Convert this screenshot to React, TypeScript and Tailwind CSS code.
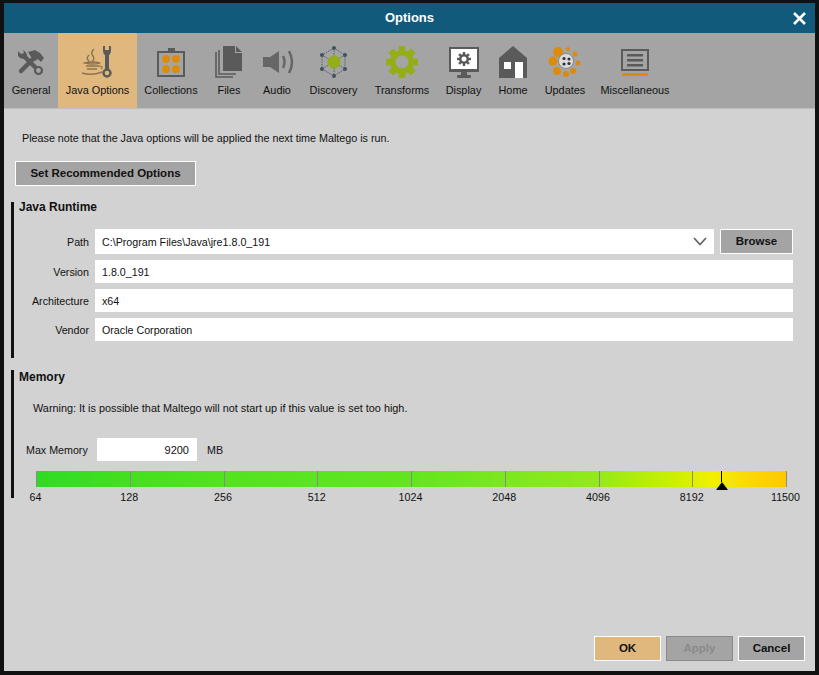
import React from 'react';

const DARK = '#5a5a5a';
const ORANGE = '#dc8c0c';

function Gear({ cx, cy, r, hole, color, tooth, toothW, teeth = 8, holeFill = 'none' }: { cx: number; cy: number; r: number; hole: number; color: string; tooth: number; toothW: number; teeth?: number; holeFill?: string }) {
  return (
    <g>
      {Array.from({ length: teeth }).map((_, i) => (
        <rect key={i} x={cx - toothW / 2} y={cy - r - tooth} width={toothW} height={tooth + 2} fill={color} transform={`rotate(${(360 / teeth) * i} ${cx} ${cy})`} />
      ))}
      <circle cx={cx} cy={cy} r={(r + hole) / 2} fill={holeFill} stroke={color} strokeWidth={r - hole} />
    </g>
  );
}

function GeneralIcon() {
  return (
    <svg viewBox="11 45 40 34" className="h-[34px] w-10">
      <path d="M21 71 L36 56" stroke={DARK} strokeWidth="4.5" strokeLinecap="round" />
      <path d="M28 52 L35 50 L40 53 L44 58 L41 62 L38 59 L35 61 L31 57 Z" fill={DARK} />
      <path d="M24 56 L39 71" stroke={DARK} strokeWidth="4.5" />
      <path d="M18 51 L21 54 L24 53 L23 50 L21 50 L23 50 Q27 52 27 56 L25 59 Q20 59 18 56 Z" fill={DARK} />
      <circle cx="38.5" cy="70.5" r="3.5" fill="#a4a4a4" stroke={DARK} strokeWidth="2.2" />
    </svg>
  );
}

function JavaIcon() {
  const tan = '#8d7350';
  return (
    <svg viewBox="78 45 40 34" className="h-[34px] w-10">
      <path d="M94 49 Q90 53 93 56 Q95 59 92 62 M89 55 Q86 58 88 60 Q90 62 88 64" stroke={tan} strokeWidth="1.4" fill="none" />
      <path d="M85 63 Q92 61 100 63 Q92 65 85 63 Z M86 66 L99 66 M87 69 L97 69 M82 73 Q92 76 102 72" stroke={tan} strokeWidth="1.6" fill="none" />
      <path d="M99 66 Q104 66 101 69" stroke={tan} strokeWidth="1.2" fill="none" />
      <path d="M103 46 L103 50 Q103 54 105 55 L105 69 L109 69 L109 55 Q111 54 111 50 L111 46 L109 46 L109 50 L105 50 L105 46 Z" fill={DARK} />
      <circle cx="107" cy="73" r="3.5" fill="#e0b87e" stroke={DARK} strokeWidth="2.4" />
    </svg>
  );
}

function CollectionsIcon() {
  return (
    <svg viewBox="151 45 40 34" className="h-[34px] w-10">
      <rect x="168" y="48" width="7" height="4" fill={DARK} />
      <rect x="158" y="52" width="26" height="24" fill="none" stroke={DARK} strokeWidth="2" />
      <circle cx="166" cy="59" r="4" fill={ORANGE} />
      <circle cx="176" cy="59" r="4" fill={ORANGE} />
      <circle cx="166" cy="69" r="4" fill={ORANGE} />
      <circle cx="176" cy="69" r="4" fill={ORANGE} />
    </svg>
  );
}

function FilesIcon() {
  return (
    <svg viewBox="209 45 40 34" className="h-[34px] w-10">
      <path d="M216 52 V77 H233" fill="none" stroke={DARK} strokeWidth="1.6" />
      <path d="M219 50 V74 H236" fill="none" stroke={DARK} strokeWidth="1.6" />
      <path d="M223 46 H235 V53 H242 V71 H223 Z" fill={DARK} />
      <path d="M236 46 L242 52 H236 Z" fill={DARK} />
    </svg>
  );
}

function AudioIcon() {
  return (
    <svg viewBox="257 45 40 34" className="h-[34px] w-10">
      <path d="M263 57 H270 L279 51 V73 L270 67 H263 Z" fill="#666" />
      <path d="M283 56 Q286 62 283 68" fill="none" stroke="#666" strokeWidth="2.5" />
      <path d="M289 51 Q295 62 289 73" fill="none" stroke="#666" strokeWidth="2.5" />
    </svg>
  );
}

function DiscoveryIcon() {
  const nodes = [[333, 48], [344, 55], [344, 69], [333, 76], [321, 69], [321, 55]];
  return (
    <svg viewBox="313 45 40 34" className="h-[34px] w-10">
      <path d="M333 48 L344 55 V69 L333 76 L321 69 V55 Z M333 48 V76 M321 55 L344 69 M344 55 L321 69" fill="none" stroke="#4a5a60" strokeWidth="0.9" strokeDasharray="1.5 1" />
      <circle cx="333" cy="62" r="6.5" fill="#94ae17" />
      {nodes.map(([x, y]) => (
        <circle key={x * y} cx={x} cy={y} r="2" fill="#3f525c" />
      ))}
    </svg>
  );
}

function TransformsIcon() {
  return (
    <svg viewBox="382 45 40 34" className="h-[34px] w-10">
      <Gear cx={402} cy={62} r={12} hole={6.5} color="#94ae17" tooth={4} toothW={6.5} />
    </svg>
  );
}

function DisplayIcon() {
  return (
    <svg viewBox="443 45 40 34" className="h-[34px] w-10">
      <rect x="448" y="47" width="30" height="25" fill={DARK} />
      <rect x="450" y="49" width="26" height="20" fill="#fff" />
      <rect x="460" y="72" width="6" height="3" fill={DARK} />
      <rect x="456" y="75" width="14" height="3" rx="1" fill={DARK} />
      <Gear cx={463} cy={59} r={5} hole={2.5} color={DARK} tooth={2} toothW={2.4} />
    </svg>
  );
}

function HomeIcon() {
  return (
    <svg viewBox="493 45 40 34" className="h-[34px] w-10">
      <path d="M513 46 L527 58 V78 H499 V58 Z" fill={DARK} />
      <rect x="504" y="62" width="7" height="7" fill="#fff" />
      <rect x="515" y="62" width="8" height="16" fill="#fff" />
    </svg>
  );
}

function UpdatesIcon() {
  const dots = [[558, 52, 5], [568, 49, 2], [575, 54, 2.5], [578, 63, 2.5], [573, 71, 3], [566, 74, 3], [557, 71, 4], [553, 61, 4.5]];
  return (
    <svg viewBox="545 45 40 34" className="h-[34px] w-10">
      {dots.map(([x, y, r]) => (
        <circle key={x} cx={x} cy={y} r={r} fill={ORANGE} />
      ))}
      <circle cx="566" cy="61" r="7.5" fill="#dcdcdc" stroke="#8a8a8a" strokeWidth="1" />
      <circle cx="564" cy="58.5" r="1.6" fill="#333" />
      <circle cx="569" cy="59" r="1.6" fill="#333" />
      <circle cx="564" cy="64" r="1.6" fill="#333" />
      <circle cx="569" cy="63.5" r="1.6" fill="#333" />
    </svg>
  );
}

function MiscIcon() {
  return (
    <svg viewBox="615 45 40 34" className="h-[34px] w-10">
      <rect x="622" y="50" width="26" height="20" fill="none" stroke={DARK} strokeWidth="2" />
      <rect x="627" y="54" width="16" height="2.5" fill={DARK} />
      <rect x="627" y="59" width="16" height="2.5" fill={DARK} />
      <rect x="627" y="64" width="16" height="2.5" fill={DARK} />
      <rect x="622" y="73" width="26" height="3" fill={ORANGE} />
    </svg>
  );
}

const tabs = [
  { label: 'General', icon: <GeneralIcon />, w: 'w-[54px]' },
  { label: 'Java Options', icon: <JavaIcon />, w: 'w-[79px]', active: true },
  { label: 'Collections', icon: <CollectionsIcon />, w: 'w-[68px]' },
  { label: 'Files', icon: <FilesIcon />, w: 'w-[48px]' },
  { label: 'Audio', icon: <AudioIcon />, w: 'w-[48px]' },
  { label: 'Discovery', icon: <DiscoveryIcon />, w: 'w-[65px]' },
  { label: 'Transforms', icon: <TransformsIcon />, w: 'w-[72px]' },
  { label: 'Display', icon: <DisplayIcon />, w: 'w-[51px]' },
  { label: 'Home', icon: <HomeIcon />, w: 'w-[48px]' },
  { label: 'Updates', icon: <UpdatesIcon />, w: 'w-[56px]' },
  { label: 'Miscellaneous', icon: <MiscIcon />, w: 'w-[84px]' },
];

const ticks = ['64', '128', '256', '512', '1024', '2048', '4096', '8192', '11500'];

function Field({ label, value }: { label: string; value: string }) {
  return (
    <div className="flex h-[23px] items-center">
      <span className="w-[84px] pr-[6px] pt-px text-right">{label}</span>
      <div className="flex h-full w-[698px] items-center bg-white pl-[7px] pt-px">{value}</div>
    </div>
  );
}

function Btn({ children, className }: { children: React.ReactNode; className?: string }) {
  return (
    <div className={`flex h-[25px] items-center justify-center border border-white bg-[#a4a4a4] text-[11.5px] font-bold text-[#111] ${className ?? ''}`}>
      {children}
    </div>
  );
}

export default function App() {
  return (
    <div className="flex h-[675px] w-[819px] flex-col border-x-4 border-t-[3px] border-b-4 border-[#111] bg-[#d2d2d2] font-['Liberation_Sans',Arial,sans-serif] text-[10.7px] text-[#111]">
      <div className="grid h-[30px] shrink-0 grid-cols-[1fr_auto_1fr] items-center bg-[#125a7c] text-white">
        <div />
        <div className="text-[13px] font-bold">Options</div>
        <div className="flex justify-end pr-[9px]">
          <svg width="13" height="13" viewBox="0 0 13 13">
            <path d="M1 1 L12 12 M12 1 L1 12" stroke="#fff" strokeWidth="2.6" />
          </svg>
        </div>
      </div>

      <div className="flex h-[76px] shrink-0 border-b border-b-[#bdbdbd] bg-[#a4a4a4]">
        {tabs.map((tab) => (
          <div key={tab.label} className={`flex flex-col items-center pt-3 ${tab.w} ${tab.active ? 'bg-[#e0b87e]' : ''}`}>
            {tab.icon}
            <span className="mt-[5px] whitespace-nowrap text-[10.9px] leading-[12px]">{tab.label}</span>
          </div>
        ))}
      </div>

      <div className="flex min-h-0 flex-1 flex-col pl-[7px]">
        <p className="ml-[11px] mt-[23px] text-[10.76px] leading-[13px]">Please note that the Java options will be applied the next time Maltego is run.</p>
        <Btn className="ml-1 mt-[16px] w-[181px]">Set Recommended Options</Btn>

        <section className="mt-[16px] h-[156px] border-l-[3px] border-l-[#111] pl-[5px]">
          <h3 className="text-[12px] font-bold leading-[10px]">Java Runtime</h3>
          <div className="mt-[17px] ml-[-8px] flex flex-col gap-[6px]">
            <div className="flex h-[25px] items-center">
              <span className="w-[84px] pr-[6px] pt-px text-right">Path</span>
              <div className="flex h-full w-[619px] items-center justify-between bg-white pl-[7px] pr-[7px]">
                <span className="pt-px">C:\Program Files\Java\jre1.8.0_191</span>
                <svg width="14" height="9" viewBox="0 0 14 9">
                  <path d="M1 1 L7 7.5 L13 1" fill="none" stroke="#666" strokeWidth="1.8" />
                </svg>
              </div>
              <Btn className="ml-[6px] w-[73px]">Browse</Btn>
            </div>
            <Field label="Version" value="1.8.0_191" />
            <Field label="Architecture" value="x64" />
            <Field label="Vendor" value="Oracle Corporation" />
          </div>
        </section>

        <section className="mt-[12px] h-[128px] border-l-[3px] border-l-[#111] pl-[5px]">
          <h3 className="text-[12px] font-bold leading-[14px]">Memory</h3>
          <p className="ml-[14px] mt-[18px] text-[10.87px] leading-[13px]">Warning: It is possible that Maltego will not start up if this value is set too high.</p>
          <div className="mt-[23px] flex h-[23px] items-center">
            <span className="ml-[7px] w-[71px] pt-[2px]">Max Memory</span>
            <div className="flex h-full w-[100px] items-center justify-end bg-white pr-2 pt-[2px] text-[11px]">9200</div>
            <span className="ml-[10px] pt-[2px]">MB</span>
          </div>
          <div className="relative ml-[17px] mt-[10px] w-[751px]">
            <div className="flex h-[16px] justify-between bg-[linear-gradient(90deg,#2edc24_0%,#44e01e_12.5%,#52e41e_25%,#5ae520_37%,#62e61e_50%,#7ce81c_62.5%,#94ea18_75%,#d8f000_87%,#f2f000_90%,#fbd808_95%,#ffc800_100%)]">
              {ticks.map((t) => (
                <div key={t} className="h-full w-px bg-[#8a8a8a]" />
              ))}
            </div>
            <div className="mt-[4px] flex justify-between">
              {ticks.map((t) => (
                <div key={t} className="flex w-px -translate-x-px justify-center whitespace-nowrap leading-[13px]">{t}</div>
              ))}
            </div>
            <div className="absolute left-[679px] top-0 flex w-[13px] flex-col items-center">
              <div className="h-[11px] w-px bg-black" />
              <div className="h-0 w-0 border-x-[6px] border-b-[8px] border-x-transparent border-b-black" />
            </div>
          </div>
        </section>

        <div className="mt-auto mb-[10px] flex justify-end gap-[5px] pr-[10px]">
          <Btn className="w-[67px] !bg-[#e0b87e]">OK</Btn>
          <Btn className="w-[67px] !border-[#8a8a8a] !text-[#8a8a8a]">Apply</Btn>
          <Btn className="w-[67px]">Cancel</Btn>
        </div>
      </div>
    </div>
  );
}
